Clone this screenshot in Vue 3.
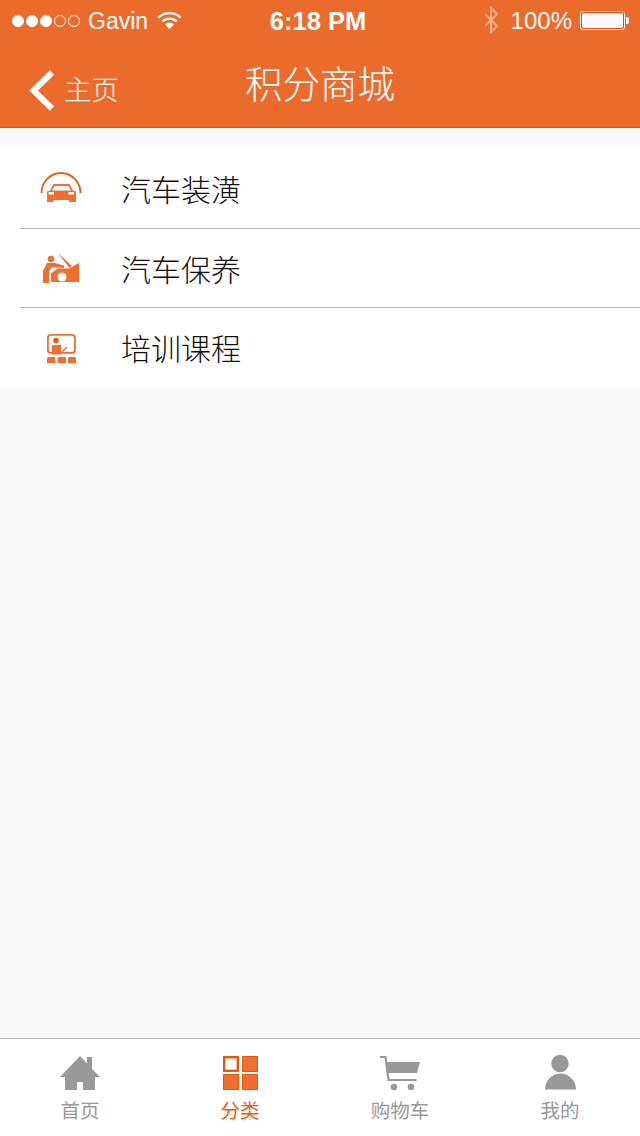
<template>
  <div class="page">
    <header class="head">
      <div class="status">
        <div class="status-left">
          <div class="signal">
            <i v-for="n in 5" :key="n" class="dot" :class="{ on: n <= 3 }"></i>
          </div>
          <span class="carrier">Gavin</span>
          <svg class="wifi" width="25" height="20" viewBox="0 0 26 20">
            <path d="M1.500 7.500a16.500 16.500 0 0 1 23 0" fill="none" stroke="#fff" stroke-width="2.400" />
            <path d="M5.500 11.500a11 11 0 0 1 15 0" fill="none" stroke="#fff" stroke-width="2.400" />
            <path d="M13 19.500l-4.600-5a6.600 6.600 0 0 1 9.200 0z" fill="#fff" />
          </svg>
        </div>
        <div class="clock">6:18 PM</div>
        <div class="status-right">
          <svg class="bt" width="16" height="28" viewBox="0 0 16 28">
            <path d="M2 8l12 12-6 6V2l6 6-12 12" fill="none" stroke="#fff" stroke-opacity=".45" stroke-width="2" />
          </svg>
          <span class="pct">100%</span>
          <div class="battery"><div class="battery-fill"></div></div>
          <div class="battery-tip"></div>
        </div>
      </div>
      <div class="nav">
        <div class="back">
          <svg width="28" height="44" viewBox="0 0 28 44">
            <path d="M23 4.500L4.500 22.500L23 40.500" fill="none" stroke="#fff" stroke-width="6" />
          </svg>
          <span class="back-text">主页</span>
        </div>
        <h1 class="title">积分商城</h1>
      </div>
    </header>

    <main class="content">
      <ul class="list">
        <li class="row">
          <svg class="row-icon" width="46" height="34" viewBox="0 0 46 34">
            <path d="M2.500 22a19.500 20 0 0 1 39 0" fill="none" stroke="#ea5a14" stroke-width="1.800" />
            <path d="M14.500 13h16l3.500 6.500 3 1V31h-7v-2H14.500v2H8V20.500l3-1z" fill="#ef6e30" />
            <path d="M15.500 15h14l2.500 4.500H13z" fill="#fff" />
            <path d="M9.500 21h5.500v2.500H9.500zM29.500 21h5.500v2.500h-5.500z" fill="#fff" />
          </svg>
          <span class="row-text">汽车装潢</span>
        </li>
        <li class="row">
          <svg class="row-icon" width="46" height="34" viewBox="0 0 46 34">
            <circle cx="12" cy="8" r="3.300" fill="#ef6e30" />
            <path d="M4 32V20l4-8h8l9 2.500V17l-12-1-3 4v12z" fill="#ef6e30" />
            <path d="M19 2l14 13-2.500 2z" fill="#ef6e30" />
            <path d="M12 31v-9l7-4.500h11l10-5.500v19z" fill="#ef6e30" />
            <circle cx="23" cy="26" r="4.500" fill="#fff" />
          </svg>
          <span class="row-text">汽车保养</span>
        </li>
        <li class="row">
          <svg class="row-icon" width="46" height="34" viewBox="0 0 46 34">
            <rect x="8.900" y="4.900" width="27" height="18" rx="3" fill="none" stroke="#ef6e30" stroke-width="1.800" />
            <circle cx="17" cy="10.500" r="2.800" fill="#ea5a14" />
            <path d="M13 15h9v9.500h-9z" fill="#ef6e30" />
            <path d="M22 23l6-6" stroke="#ef6e30" stroke-width="1.200" />
            <path d="M8 33v-4a2 2 0 0 1 2-2h5a1.500 1.500 0 0 1 1.500 1.500V33zM18.500 33v-4.500A1.500 1.500 0 0 1 20 27h5.500a1.500 1.500 0 0 1 1.500 1.500V33zM29 33v-4.500a1.500 1.500 0 0 1 1.500-1.500h5a1.500 1.500 0 0 1 1.500 1.500V33z" fill="#ef6e30" />
          </svg>
          <span class="row-text">培训课程</span>
        </li>
      </ul>
    </main>

    <footer class="tabs">
      <div class="tab">
        <svg width="42" height="36" viewBox="0 0 42 36">
          <path d="M1 22L21 1l7 7.500V2h5v12l8 8h-5v13H24v-8h-6v8H6V22z" fill="#999" />
        </svg>
        <span>首页</span>
      </div>
      <div class="tab active">
        <svg width="36" height="36" viewBox="0 0 36 36">
          <rect x="2.200" y="2.200" width="13.600" height="13.600" fill="#fff" stroke="#e8590c" stroke-width="2.400" />
          <rect x="20.500" y="1.500" width="15" height="15" fill="#ef6e30" stroke="#e8590c" />
          <rect x="1.500" y="19.500" width="15" height="15" fill="#ef6e30" stroke="#e8590c" />
          <rect x="20.500" y="19.500" width="15" height="15" fill="#ef6e30" stroke="#e8590c" />
        </svg>
        <span>分类</span>
      </div>
      <div class="tab">
        <svg width="42" height="36" viewBox="0 0 42 36">
          <path d="M1 2h5.500l3 23H37.500" fill="none" stroke="#999" stroke-width="2.200" />
          <path d="M7 7h34l-3 11H9z" fill="#999" />
          <circle cx="15" cy="32" r="3.300" fill="#999" />
          <circle cx="32" cy="32" r="3.300" fill="#999" />
        </svg>
        <span>购物车</span>
      </div>
      <div class="tab">
        <svg width="34" height="36" viewBox="0 0 34 36">
          <circle cx="17" cy="8.500" r="8.700" fill="#999" />
          <path d="M2 34.500a15.500 16 0 0 1 31 0z" fill="#999" />
        </svg>
        <span>我的</span>
      </div>
    </footer>
  </div>
</template>

<script setup>
</script>

<style>
html,
body {
  margin: 0;
  background: #fafafa;
}
</style>

<style scoped>
.page {
  width: 640px;
  height: 1136px;
  display: flex;
  flex-direction: column;
  overflow: hidden;
  background: #fafafa;
  font-family: "Liberation Sans", "Noto Sans CJK SC", sans-serif;
}

.head {
  height: 128px;
  box-sizing: border-box;
  background: #eb6b2d;
  border-bottom: 1px solid #df5716;
  color: #fff;
}

.status {
  height: 40px;
  box-sizing: border-box;
  padding: 2px 11px 0 12px;
  display: flex;
  align-items: center;
  justify-content: space-between;
  position: relative;
}

.status-left,
.status-right {
  display: flex;
  align-items: center;
}

.signal {
  display: flex;
  gap: 2px;
  margin-right: 8px;
}

.dot {
  width: 12px;
  height: 12px;
  box-sizing: border-box;
  border: 1px solid #fff;
  border-radius: 50%;
}

.dot.on {
  background: #fff;
}

.carrier {
  font-size: 23px;
  margin-right: 9px;
}

.wifi {
  margin-top: -3px;
}

.clock {
  position: absolute;
  left: 0;
  right: 4px;
  text-align: center;
  font-size: 25.500px;
  font-weight: bold;
}

.bt {
  margin-top: -3px;
  margin-right: 12px;
}

.pct {
  font-size: 24px;
  margin-right: 8px;
}

.battery {
  width: 45px;
  height: 19px;
  margin-top: -2px;
  box-sizing: border-box;
  border: 1px solid #fff;
  border-radius: 3px;
  padding: 1px;
  background: #e8500a;
}

.battery-fill {
  height: 100%;
  background: #fafafa;
  border-radius: 2px;
}

.battery-tip {
  width: 3px;
  height: 7px;
  margin-top: -2px;
  margin-left: 1px;
  background: #fff;
  border-radius: 0 2px 2px 0;
}

.nav {
  height: 87px;
  position: relative;
  display: flex;
  align-items: center;
  justify-content: center;
}

.back {
  position: absolute;
  left: 29px;
  top: 26px;
  display: flex;
  align-items: center;
}

.back-text {
  font-size: 27.500px;
  line-height: 44px;
  font-weight: 300;
  margin-left: 7px;
  margin-top: 3px;
}

.title {
  margin: 3px 0 0;
  font-size: 37.500px;
  line-height: 50px;
  font-weight: 300;
}

.content {
  flex: 1;
  padding-top: 20px;
}

.list {
  margin: 0;
  padding: 0 0 1px;
  list-style: none;
  background: #fff;
}

.row {
  height: 79px;
  margin-left: 20px;
  box-sizing: border-box;
  display: flex;
  align-items: center;
  border-top: 1px solid #bbb;
  color: #111;
}

.row:first-child {
  height: 80px;
  border-top: 0;
}

.row-icon {
  margin-left: 19px;
  margin-right: 36px;
}

.row-text {
  font-size: 30px;
  line-height: 40px;
  font-weight: 300;
  margin-top: 6px;
}

.tabs {
  height: 98px;
  box-sizing: border-box;
  background: #fff;
  border-top: 1px solid #b5b5b5;
  display: flex;
}

.tab {
  flex: 1;
  display: flex;
  flex-direction: column;
  align-items: center;
  padding-top: 16px;
  color: #999;
  font-size: 19.500px;
  line-height: 28px;
}

.tab svg {
  display: block;
  margin-bottom: 6px;
}

.tab.active {
  color: #ea5a14;
}
</style>
